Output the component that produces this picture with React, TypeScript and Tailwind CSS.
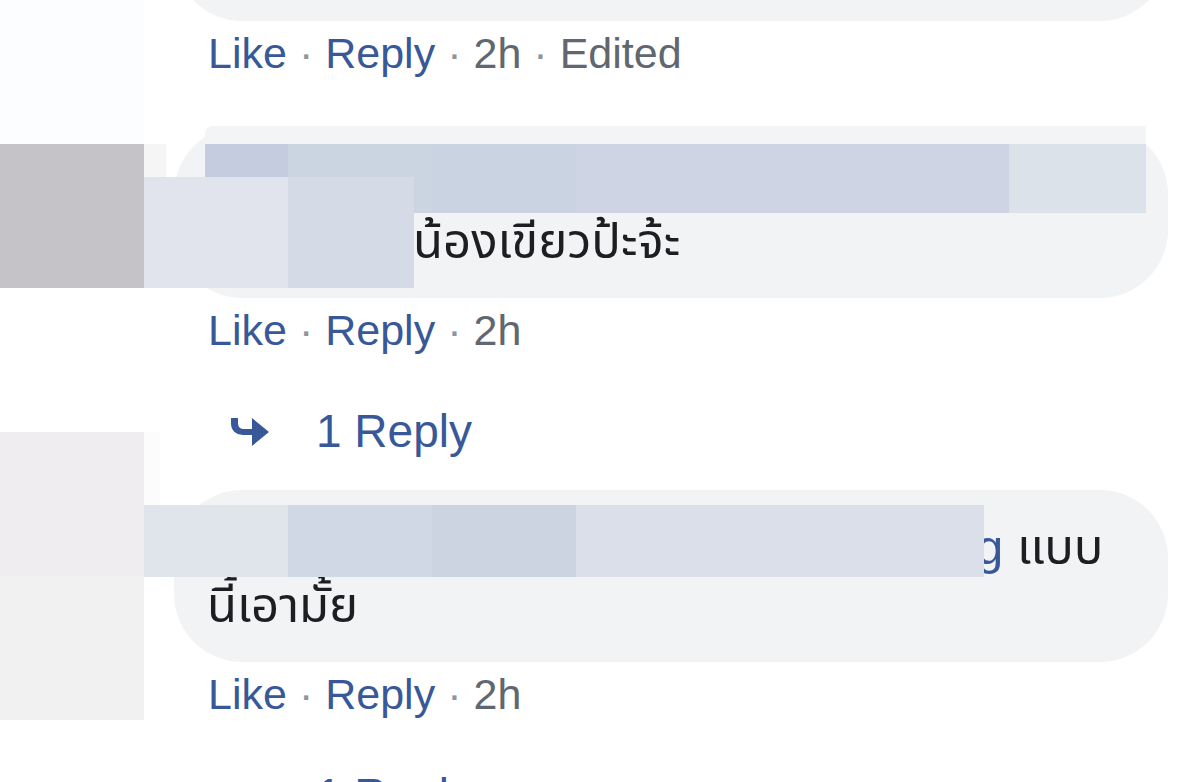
import type { ReactNode } from "react";

function Actions({ edited = false }: { edited?: boolean }) {
  return (
    <div className="flex gap-3 pt-1.5 pb-[47px] pl-[34px] text-[43px] leading-[52px] whitespace-nowrap text-[#616770]">
      <a href="#like" className="text-[#385898]">Like</a>
      <span className="text-[#90949c]">·</span>
      <a href="#reply" className="text-[#385898]">Reply</a>
      <span className="text-[#90949c]">·</span>
      <span>2h</span>
      {edited && (
        <>
          <span className="text-[#90949c]">·</span>
          <span>Edited</span>
        </>
      )}
    </div>
  );
}

function ReplyCount() {
  return (
    <a href="#replies" className="flex items-center gap-[46px] pb-[31px] pl-[56px] text-[46px] leading-[56px] text-[#385898]">
      <svg width="40" height="32" viewBox="0 0 40 32" fill="#385898" aria-hidden="true">
        <path d="M1 3H8V8Q8 14 14 14H22V3L39 17L22 31V20H13Q1 19 1 8Z" />
      </svg>
      <span>1 Reply</span>
    </a>
  );
}

function Bubble({ children }: { children: ReactNode }) {
  return (
    <div className="relative rounded-[68px] bg-[#f2f3f5] pt-7 pr-[31px] pb-7 pl-[33px] text-[49px] leading-[58px] whitespace-nowrap text-[#1c1e21]">
      {children}
    </div>
  );
}

export default function App() {
  return (
    <main className="flex h-screen overflow-hidden bg-white font-['Liberation_Sans','Noto_Sans_Thai',Arial,sans-serif]">
      <div className="w-36 shrink-0">
        <div className="h-36 bg-[#fbfdff]" />
        <div className="h-36 bg-[#c5c3c8]" />
        <div className="mt-36 h-36 bg-[#efedf0]" />
        <div className="h-36 bg-[#f1f1f1]" />
      </div>
      <div className="min-w-0 flex-1 pr-8 pl-[30px]">
        <article>
          <div className="-mt-[115px] h-[136px] rounded-[68px] bg-[#f2f3f5]" />
          <Actions edited />
        </article>

        <article>
          <Bubble>
            <div className="absolute top-0 right-[22px] left-[31px] h-[18px] rounded-tl-lg bg-[#f3f4f6]" />
            <div className="absolute top-[18px] -left-[30px] h-[33px] w-[22px] bg-[#f5f5f5]" />
            <div className="absolute top-[18px] right-[22px] left-[31px] flex h-[69px]">
              <div className="w-[83px] bg-[#c5cce0]" />
              <div className="w-36 bg-[#cbd4e1]" />
              <div className="w-36 bg-[#cad3e2]" />
              <div className="flex-1 bg-[#ced4e3]" />
              <div className="w-[137px] bg-[#dce2ea]" />
            </div>
            <p className="pt-[58px] pl-[206px]">น้องเขียวป้ะจ้ะ</p>
            <div className="absolute top-[51px] -left-[30px] flex h-[111px]">
              <div className="w-36 bg-[#e1e4ec]" />
              <div className="w-[126px] bg-[#d4dae6]" />
            </div>
          </Bubble>
          <Actions />
          <ReplyCount />
        </article>

        <article>
          <Bubble>
            <p>
              <a href="#profile" className="pl-[769px] text-[#385898]">g</a> แบบ
              <br />
              นี้เอามั้ย
            </p>
            <div className="absolute top-[15px] -left-[30px] flex h-[72px] w-[840px]">
              <div className="w-36 bg-[#e0e4eb]" />
              <div className="w-36 bg-[#d0d7e5]" />
              <div className="w-36 bg-[#ccd4e2]" />
              <div className="flex-1 bg-[#dadfe9]" />
            </div>
            <div className="absolute -top-[58px] -left-[30px] h-[73px] w-4 bg-[#fcfcfc]" />
          </Bubble>
          <Actions />
          <ReplyCount />
        </article>
      </div>
    </main>
  );
}
